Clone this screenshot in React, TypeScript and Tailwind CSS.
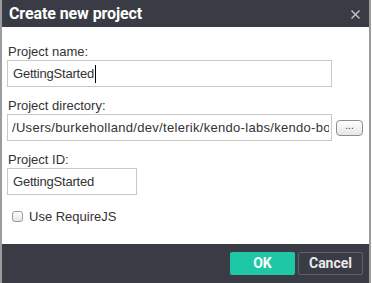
import React from "react";

export default function App() {
  return (
    <div className="w-[372px] h-[283px] bg-white overflow-hidden" style={{ fontFamily: "'Liberation Sans', Arial, sans-serif" }}>
      <div className="w-[371px] h-[283px] flex flex-col border-x-2 border-[#9c9c9c]">
        <div className="h-[27px] bg-[#393c44] flex items-center justify-between pl-[7px] pr-[9px]">
          <span className="text-[16px] font-bold text-white leading-none tracking-[-0.1px]" style={{ fontFamily: "Roboto, sans-serif" }}>Create new project</span>
          <svg width="9" height="9" viewBox="0 0 9 9" className="mt-[1px]">
            <path d="M0.5 0.5 L8.5 8.5 M8.5 0.5 L0.5 8.5" stroke="#c4c6cb" strokeWidth="1.4" />
          </svg>
        </div>
        <div className="flex-1 flex flex-col pl-[5px] pt-[17px] text-[#333]">
          <div className="h-[16px] leading-[16px] text-[13px] pl-[1px]">Project name:</div>
          <div className="relative w-[325px] h-[27px] border border-[#c8c8c8] flex items-center pl-[5px] text-[13px] tracking-[-0.2px]">
            <span>GettingStarted</span>
            <span className="w-[1px] h-[18px] bg-black ml-[1px]" />
          </div>
          <div className="h-[16px] leading-[16px] text-[13px] pl-[1px] mt-[11px]">Project directory:</div>
          <div className="flex items-center">
            <div className="w-[325px] h-[27px] border border-[#c8c8c8] pl-[4px] pr-[2px] flex items-center overflow-hidden">
              <span className="block w-full overflow-hidden whitespace-nowrap text-[13px] tracking-[0.3px] leading-[25px]">
                /Users/burkeholland/dev/telerik/kendo-labs/kendo-bootstrapper
              </span>
            </div>
            <div className="ml-[4px] w-[27px] h-[16px] rounded-[4px] border border-[#8e8e8e] bg-gradient-to-b from-white to-[#e6e6e6] flex items-center justify-center text-[10px] leading-none text-[#333] pb-[3px]">
              ...
            </div>
          </div>
          <div className="h-[16px] leading-[16px] text-[13px] pl-[1px] mt-[11px]">Project ID:</div>
          <div className="w-[130px] h-[27px] border border-[#c8c8c8] flex items-center pl-[5px] text-[13px] tracking-[-0.2px]">
            GettingStarted
          </div>
          <div className="h-[16px] mt-[13px] flex items-center pl-[5px]">
            <span className="w-[11px] h-[11px] rounded-[3px] border border-[#9a9a9a] bg-gradient-to-b from-white to-[#e4e4e4] mt-[1px]" />
            <span className="ml-[6px] text-[13px] leading-[16px] mt-[1px]">Use RequireJS</span>
          </div>
        </div>
        <div className="h-[39px] bg-[#393c44] flex justify-end items-start pt-[8px] pr-[6px] gap-[3px]" style={{ fontFamily: "Roboto, sans-serif" }}>
          <div className="w-[65px] h-[23px] rounded-[2px] bg-[#1ec8a6] text-white text-[14px] font-bold flex items-center justify-center">OK</div>
          <div className="w-[65px] h-[23px] rounded-[2px] border border-[#5f626a] text-[#e8e8e8] text-[14px] font-bold flex items-center justify-center">Cancel</div>
        </div>
      </div>
    </div>
  );
}
